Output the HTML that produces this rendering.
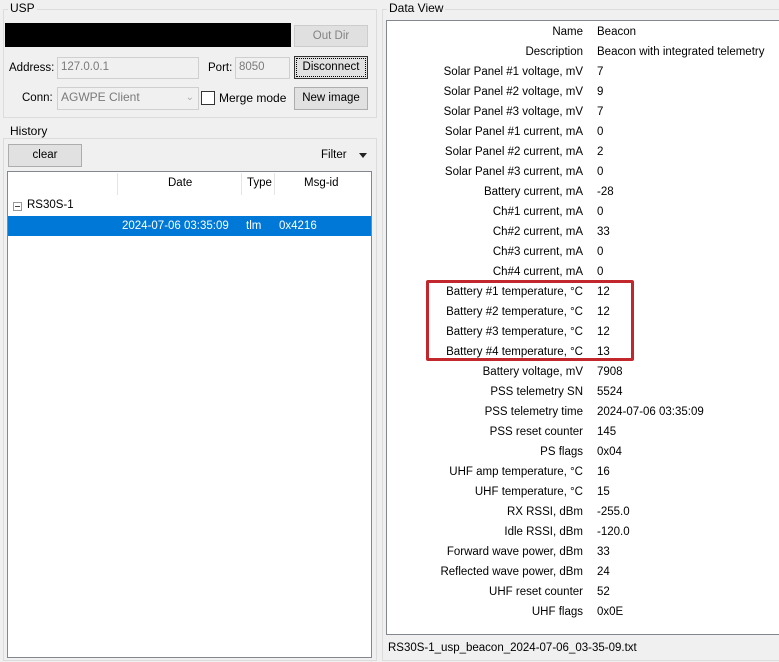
<!DOCTYPE html>
<html><head><meta charset="utf-8"><style>
*{box-sizing:border-box;margin:0;padding:0}
body{width:779px;height:662px;background:#f0f0f0;font-family:"Liberation Sans",sans-serif;font-size:11.5px;color:#000;position:relative;overflow:hidden}
.a{position:absolute}
.grp{position:absolute;border:1px solid #dcdcdc}
.lbl{position:absolute;background:#f0f0f0;padding:0 2px;font-size:12px}
.btn{position:absolute;background:#e1e1e1;border:1px solid #adadad;text-align:center;line-height:20px}
.inp{position:absolute;background:#f0f0f0;border:1px solid #cfcfcf;color:#7a7a7a;line-height:19px;padding-left:3px}
.r{position:absolute;left:386px;width:393px;height:20px;line-height:20px}
.r .k{position:absolute;right:196px;text-align:right;white-space:nowrap}
.r .v{position:absolute;left:211px;white-space:nowrap}
</style></head><body>
<div class="grp" style="left:3px;top:9px;width:374px;height:109px"></div>
<div class="lbl" style="left:8px;top:1px">USP</div>
<div class="a" style="left:5px;top:23px;width:286px;height:24px;background:#000"></div>
<div class="btn" style="left:294px;top:25px;width:74px;height:22px;color:#838383;background:#e0e0e0;border-color:#cdcdcd">Out Dir</div>
<div class="a" style="left:9px;top:62px">Address:</div>
<div class="inp" style="left:57px;top:57px;width:142px;height:22px">127.0.0.1</div>
<div class="a" style="left:208px;top:62px">Port:</div>
<div class="inp" style="left:235px;top:57px;width:55px;height:22px">8050</div>
<div class="btn" style="left:294px;top:56px;width:74px;height:23px;border:1px solid #333;outline:1px dotted #000;outline-offset:-3px">Disconnect</div>
<div class="a" style="left:22px;top:92px">Conn:</div>
<div class="inp" style="left:57px;top:87px;width:142px;height:23px;font-size:12px">AGWPE Client<span style="position:absolute;right:4px;top:0;color:#aaa;font-size:10px">&#8964;</span></div>
<div class="a" style="left:201px;top:91px;width:14px;height:14px;border:1px solid #333;background:#fff"></div>
<div class="a" style="left:219px;top:91px;font-size:12px">Merge mode</div>
<div class="btn" style="left:294px;top:87px;width:74px;height:23px">New image</div>

<div class="grp" style="left:3px;top:138px;width:374px;height:523px"></div>
<div class="lbl" style="left:8px;top:124px">History</div>
<div class="btn" style="left:8px;top:144px;width:74px;height:23px">clear</div>
<div class="a" style="left:321px;top:149px">Filter</div>
<div class="a" style="left:359px;top:153px;width:0;height:0;border-left:4px solid transparent;border-right:4px solid transparent;border-top:5px solid #222"></div>
<div class="a" style="left:7px;top:171px;width:365px;height:487px;background:#fff;border:1px solid #828790"></div>
<div class="a" style="left:117px;top:173px;width:1px;height:22px;background:#e5e5e5"></div>
<div class="a" style="left:241px;top:173px;width:1px;height:22px;background:#e5e5e5"></div>
<div class="a" style="left:274px;top:173px;width:1px;height:22px;background:#e5e5e5"></div>
<div class="a" style="left:168px;top:177px">Date</div>
<div class="a" style="left:247px;top:177px">Type</div>
<div class="a" style="left:304px;top:177px">Msg-id</div>
<div class="a" style="left:13px;top:202px;width:9px;height:9px;border:1px solid #999;background:#fff"></div>
<div class="a" style="left:15px;top:206px;width:5px;height:1px;background:#444"></div>
<div class="a" style="left:27px;top:199px">RS30S-1</div>
<div class="a" style="left:8px;top:216px;width:363px;height:20px;background:#0078d7;color:#fff;line-height:20px">
<span class="a" style="left:114px">2024-07-06 03:35:09</span><span class="a" style="left:238px">tlm</span><span class="a" style="left:271px">0x4216</span></div>

<div class="grp" style="left:382px;top:9px;width:400px;height:652px"></div>
<div class="lbl" style="left:387px;top:1px">Data View</div>
<div class="a" style="left:386px;top:20px;width:400px;height:615px;background:#fff;border:1px solid #828790"></div>
<div class="r" style="top:22px"><span class="k">Name</span><span class="v">Beacon</span></div>
<div class="r" style="top:42px"><span class="k">Description</span><span class="v">Beacon with integrated telemetry</span></div>
<div class="r" style="top:62px"><span class="k">Solar Panel #1 voltage, mV</span><span class="v">7</span></div>
<div class="r" style="top:82px"><span class="k">Solar Panel #2 voltage, mV</span><span class="v">9</span></div>
<div class="r" style="top:102px"><span class="k">Solar Panel #3 voltage, mV</span><span class="v">7</span></div>
<div class="r" style="top:122px"><span class="k">Solar Panel #1 current, mA</span><span class="v">0</span></div>
<div class="r" style="top:142px"><span class="k">Solar Panel #2 current, mA</span><span class="v">2</span></div>
<div class="r" style="top:162px"><span class="k">Solar Panel #3 current, mA</span><span class="v">0</span></div>
<div class="r" style="top:182px"><span class="k">Battery current, mA</span><span class="v">-28</span></div>
<div class="r" style="top:202px"><span class="k">Ch#1 current, mA</span><span class="v">0</span></div>
<div class="r" style="top:222px"><span class="k">Ch#2 current, mA</span><span class="v">33</span></div>
<div class="r" style="top:242px"><span class="k">Ch#3 current, mA</span><span class="v">0</span></div>
<div class="r" style="top:262px"><span class="k">Ch#4 current, mA</span><span class="v">0</span></div>
<div class="r" style="top:282px"><span class="k">Battery #1 temperature, °C</span><span class="v">12</span></div>
<div class="r" style="top:302px"><span class="k">Battery #2 temperature, °C</span><span class="v">12</span></div>
<div class="r" style="top:322px"><span class="k">Battery #3 temperature, °C</span><span class="v">12</span></div>
<div class="r" style="top:342px"><span class="k">Battery #4 temperature, °C</span><span class="v">13</span></div>
<div class="r" style="top:362px"><span class="k">Battery voltage, mV</span><span class="v">7908</span></div>
<div class="r" style="top:382px"><span class="k">PSS telemetry SN</span><span class="v">5524</span></div>
<div class="r" style="top:402px"><span class="k">PSS telemetry time</span><span class="v">2024-07-06 03:35:09</span></div>
<div class="r" style="top:422px"><span class="k">PSS reset counter</span><span class="v">145</span></div>
<div class="r" style="top:442px"><span class="k">PS flags</span><span class="v">0x04</span></div>
<div class="r" style="top:462px"><span class="k">UHF amp temperature, °C</span><span class="v">16</span></div>
<div class="r" style="top:482px"><span class="k">UHF temperature, °C</span><span class="v">15</span></div>
<div class="r" style="top:502px"><span class="k">RX RSSI, dBm</span><span class="v">-255.0</span></div>
<div class="r" style="top:522px"><span class="k">Idle RSSI, dBm</span><span class="v">-120.0</span></div>
<div class="r" style="top:542px"><span class="k">Forward wave power, dBm</span><span class="v">33</span></div>
<div class="r" style="top:562px"><span class="k">Reflected wave power, dBm</span><span class="v">24</span></div>
<div class="r" style="top:582px"><span class="k">UHF reset counter</span><span class="v">52</span></div>
<div class="r" style="top:602px"><span class="k">UHF flags</span><span class="v">0x0E</span></div>
<div class="a" style="left:426px;top:280px;width:208px;height:81px;border:3px solid #c1272d;border-radius:2px"></div>
<div class="a" style="left:388px;top:642px;background:#f0f0f0;width:391px">RS30S-1_usp_beacon_2024-07-06_03-35-09.txt</div>
</body></html>
